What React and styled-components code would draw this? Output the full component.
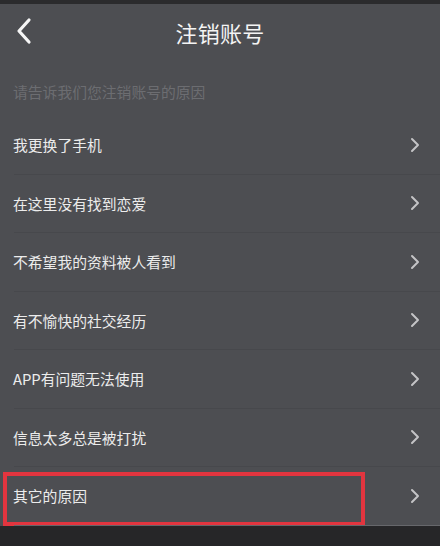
import React from 'react'
import styled, { createGlobalStyle } from 'styled-components'

const GlobalStyle = createGlobalStyle`
  html, body {
    margin: 0;
    padding: 0;
    background: #262628;
  }
  body {
    font-family: "Noto Sans CJK SC", "Noto Sans", sans-serif;
  }
`

const Page = styled.div`
  width: 440px;
  height: 546px;
  display: flex;
  flex-direction: column;
  background: #4d4e52;
  overflow: hidden;
`

const StatusStrip = styled.div`
  height: 4px;
  background: #2b2b2d;
`

const Header = styled.div`
  height: 56px;
  display: flex;
  align-items: center;
  justify-content: center;
  position: relative;
`

const BackButton = styled.div`
  position: absolute;
  left: 13px;
  top: 12px;
  width: 22px;
  height: 30px;
  display: flex;
  align-items: center;
  justify-content: center;
`

const Title = styled.h1`
  margin: 0;
  font-size: 22px;
  font-weight: 400;
  color: #f4f4f4;
  letter-spacing: 0.3px;
`

const Hint = styled.div`
  height: 56px;
  box-sizing: border-box;
  padding: 6px 13px 0;
  display: flex;
  align-items: center;
  font-size: 14.8px;
  color: #6c6d71;
`

const List = styled.div`
  display: flex;
  flex-direction: column;
`

const Row = styled.div`
  position: relative;
  height: 57.5px;
  display: flex;
  align-items: center;
  justify-content: space-between;
  padding: 0 20px 0 13px;
  &:after {
    content: "";
    position: absolute;
    left: 14px;
    right: 0;
    bottom: -1px;
    height: 1px;
    background: ${p => (p.$last ? '#66676b' : '#47484c')};
  }
  & + & {
    margin-top: 1px;
  }
`

const Label = styled.span`
  font-size: 14.8px;
  color: #ececec;
`

const Highlight = styled.div`
  position: absolute;
  left: 3px;
  top: 5px;
  width: 362px;
  height: 54px;
  box-sizing: border-box;
  border: 4px solid #e2353f;
`

const Footer = styled.div`
  flex: 1;
  margin-top: 1px;
  background: #262628;
`

const Chevron = () => (
  <svg width="10" height="16" viewBox="0 0 10 16">
    <path d="M2 2 L8 8 L2 14" fill="none" stroke="#c4c4c6" strokeWidth="2" strokeLinecap="round" strokeLinejoin="round" />
  </svg>
)

const reasons = [
  '我更换了手机',
  '在这里没有找到恋爱',
  '不希望我的资料被人看到',
  '有不愉快的社交经历',
  'APP有问题无法使用',
  '信息太多总是被打扰',
  '其它的原因',
]

const App = () => {
  return (
    <Page>
      <GlobalStyle />
      <StatusStrip />
      <Header>
        <BackButton>
          <svg width="18" height="28" viewBox="0 0 18 28">
            <path d="M14 3 L4 14 L14 25" fill="none" stroke="#f6f6f6" strokeWidth="3.2" strokeLinecap="round" strokeLinejoin="round" />
          </svg>
        </BackButton>
        <Title>注销账号</Title>
      </Header>
      <Hint>请告诉我们您注销账号的原因</Hint>
      <List>
        {reasons.map((r, i) => (
          <Row key={r} $last={i === reasons.length - 1}>
            <Label>{r}</Label>
            <Chevron />
            {i === reasons.length - 1 && <Highlight />}
          </Row>
        ))}
      </List>
      <Footer />
    </Page>
  )
}

export default App
